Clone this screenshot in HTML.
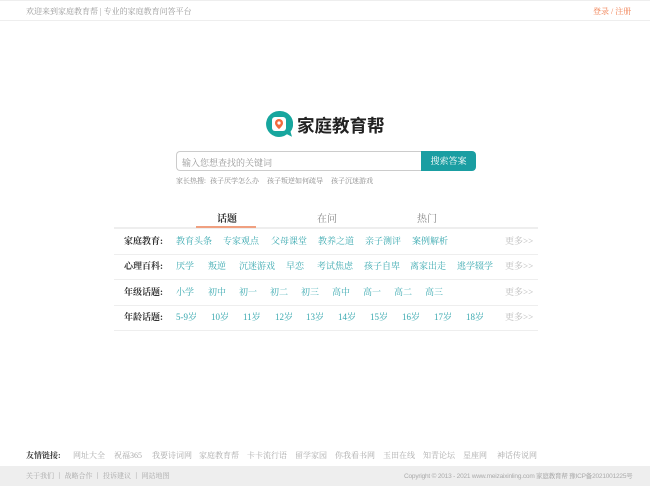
<!DOCTYPE html>
<html><head><meta charset="utf-8"><style>
*{margin:0;padding:0;box-sizing:border-box}
body{width:650px;height:500px;background:#fff;font-family:"Liberation Serif","Noto Serif CJK SC",serif;position:relative;overflow:hidden;color:#999}
.a{position:absolute;white-space:nowrap}
.top{position:absolute;left:0;top:0;width:650px;height:21px;border-top:1px solid #eee;border-bottom:1px solid #eee;font-size:8px}
.row{position:absolute;left:114px;width:424px;height:26px;border-bottom:1px solid #eee;font-size:9px}
.row .l{position:absolute;left:10px;top:5px;font-weight:bold;color:#333}
.row .i{position:absolute;top:5px;color:#3aa9b0}
.row .m{position:absolute;left:391px;top:5px;color:#bbb}
.f{position:absolute;top:450px;font-size:8px;color:#aaa;white-space:nowrap}
.h{position:absolute;top:176px;font-size:7px;color:#888;white-space:nowrap}
</style></head><body>
<div class="top"><span class="a" style="left:26px;top:5px">欢迎来到家庭教育帮 | 专业的家庭教育问答平台</span><span class="a" style="left:593px;top:5px;color:#f07a4a">登录 / 注册</span></div>
<svg class="a" style="left:265px;top:110px" width="28" height="28" viewBox="0 0 28 28"><path d="M14 1a13 13 0 1 0 8 23.3l5 2.5-1.5-5A13 13 0 0 0 14 1z" fill="#17a69e"/><rect x="7" y="7" width="14" height="14" rx="3" fill="#fff"/><path d="M14 9a4 4 0 0 0-4 4c0 3 4 6 4 6s4-3 4-6a4 4 0 0 0-4-4z" fill="#f26a3d"/><circle cx="14" cy="13" r="1.6" fill="#fff"/></svg>
<span class="a" style="left:297px;top:113px;font-size:17.5px;font-weight:bold;color:#222;font-family:'Liberation Sans','Noto Sans CJK SC',sans-serif">家庭教育帮</span>
<div class="a" style="left:176px;top:151px;width:246px;height:20px;border:1px solid #ccc;border-right:none;border-radius:4px 0 0 4px;font-size:9px;color:#999;padding:4px 0 0 5px">输入您想查找的关键词</div>
<div class="a" style="left:421px;top:151px;width:55px;height:20px;background:#1a9ea2;border-radius:0 4px 4px 0;color:#fff;font-size:9px;text-align:center;line-height:20px">搜索答案</div>
<span class="h" style="left:176px">家长热搜:</span>
<span class="h" style="left:210px">孩子厌学怎么办</span>
<span class="h" style="left:267px">孩子叛逆如何疏导</span>
<span class="h" style="left:331px">孩子沉迷游戏</span>
<span class="a" style="left:217px;top:210px;font-size:10px;font-weight:bold;color:#333">话题</span>
<span class="a" style="left:317px;top:210px;font-size:10px;color:#888">在问</span>
<span class="a" style="left:417px;top:210px;font-size:10px;color:#888">热门</span>
<div class="a" style="left:114px;top:227px;width:424px;height:2px;background:#eee"></div>
<div class="a" style="left:196px;top:226px;width:60px;height:2px;background:#f0a080"></div>
<div class="row" style="top:229px"><span class="l">家庭教育:</span><span class="i" style="left:62px">教育头条</span><span class="i" style="left:109px">专家观点</span><span class="i" style="left:157px">父母课堂</span><span class="i" style="left:204px">教养之道</span><span class="i" style="left:251px">亲子测评</span><span class="i" style="left:298px">案例解析</span><span class="m">更多&gt;&gt;</span></div>
<div class="row" style="top:254px"><span class="l">心理百科:</span><span class="i" style="left:62px">厌学</span><span class="i" style="left:94px">叛逆</span><span class="i" style="left:125px">沉迷游戏</span><span class="i" style="left:172px">早恋</span><span class="i" style="left:203px">考试焦虑</span><span class="i" style="left:250px">孩子自卑</span><span class="i" style="left:296px">离家出走</span><span class="i" style="left:343px">逃学辍学</span><span class="m">更多&gt;&gt;</span></div>
<div class="row" style="top:280px"><span class="l">年级话题:</span><span class="i" style="left:62px">小学</span><span class="i" style="left:94px">初中</span><span class="i" style="left:125px">初一</span><span class="i" style="left:156px">初二</span><span class="i" style="left:187px">初三</span><span class="i" style="left:218px">高中</span><span class="i" style="left:249px">高一</span><span class="i" style="left:280px">高二</span><span class="i" style="left:311px">高三</span><span class="m">更多&gt;&gt;</span></div>
<div class="row" style="top:305px"><span class="l">年龄话题:</span><span class="i" style="left:62px">5-9岁</span><span class="i" style="left:97px">10岁</span><span class="i" style="left:129px">11岁</span><span class="i" style="left:161px">12岁</span><span class="i" style="left:192px">13岁</span><span class="i" style="left:224px">14岁</span><span class="i" style="left:256px">15岁</span><span class="i" style="left:288px">16岁</span><span class="i" style="left:320px">17岁</span><span class="i" style="left:352px">18岁</span><span class="m">更多&gt;&gt;</span></div>
<span class="a" style="left:26px;top:450px;font-size:8px;font-weight:bold;color:#333">友情链接:</span>
<span class="f" style="left:73px">网址大全</span><span class="f" style="left:114px">祝福365</span><span class="f" style="left:152px">我要诗词网</span><span class="f" style="left:199px">家庭教育帮</span><span class="f" style="left:247px">卡卡流行语</span><span class="f" style="left:295px">留学家园</span><span class="f" style="left:335px">你我看书网</span><span class="f" style="left:383px">玉田在线</span><span class="f" style="left:423px">知青论坛</span><span class="f" style="left:463px">星座网</span><span class="f" style="left:497px">神话传说网</span>
<div class="a" style="left:0;top:466px;width:650px;height:20px;background:#eee"></div>
<span class="a" style="left:26px;top:471px;font-size:7px;color:#aaa">关于我们 丨 战略合作 丨 投诉建议 丨 网站地图</span>
<span class="a" style="left:404px;top:470px;font-size:6.5px;letter-spacing:-0.2px;color:#aaa;font-family:'Liberation Sans','Noto Sans CJK SC',sans-serif">Copyright © 2013 - 2021 www.meizaixinling.com 家庭教育帮 豫ICP备2021001225号</span>
</body></html>
